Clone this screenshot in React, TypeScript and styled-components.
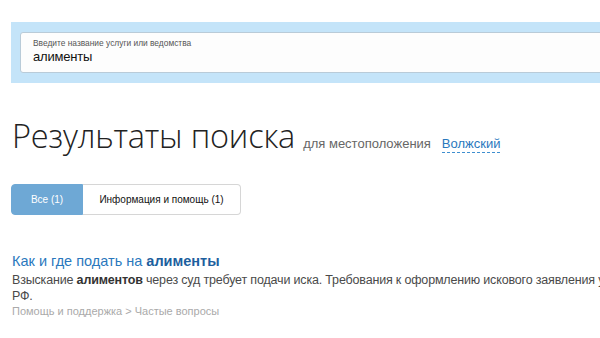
import styled, { createGlobalStyle } from "styled-components";

const Global = createGlobalStyle`
    html, body {
        margin: 0;
        padding: 0;
        background: #fff;
        overflow: hidden;
    }
    body {
        font-family: "Liberation Sans", Arial, sans-serif;
    }
`;

const Page = styled.div`
    width: 760px;
    padding: 22px 0 0 11px;
`;

const SearchBand = styled.div`
    background: #c4e4f9;
    padding: 10px 9px 10px 9px;
`;

const SearchBox = styled.div`
    background: #fdfdfd;
    border: 1px solid #b9cbd8;
    border-radius: 3px;
    height: 41px;
    box-sizing: border-box;
    padding: 5px 12px 0;
`;

const SearchLabel = styled.div`
    font-size: 8.4px;
    color: #555;
    line-height: 10px;
`;

const SearchValue = styled.div`
    font-size: 13px;
    letter-spacing: -0.2px;
    color: #111;
    line-height: 16px;
    margin-top: 1px;
`;

const Heading = styled.div`
    display: flex;
    align-items: baseline;
    margin-top: 33px;
    padding-left: 1px;
`;

const Title = styled.h1`
    margin: 0;
    font-family: "Open Sans", sans-serif;
    font-weight: 300;
    font-size: 32.5px;
    color: #222;
    line-height: 40px;
    letter-spacing: -0.2px;
`;

const Location = styled.span`
    font-size: 13px;
    color: #666;
    margin-left: 8px;
`;

const City = styled.a`
    font-size: 13px;
    color: #2a78bd;
    margin-left: 11px;
    text-decoration: none;
    border-bottom: 1px dashed #3f8fd0;
    padding-bottom: 1px;
`;

const Tabs = styled.div`
    display: flex;
    margin-top: 28px;
`;

const Tab = styled.div<{ $active?: boolean; $w: number }>`
    width: ${(p) => p.$w}px;
    height: 31px;
    box-sizing: border-box;
    display: flex;
    align-items: center;
    justify-content: center;
    font-size: 10px;
    color: ${(p) => (p.$active ? "#fff" : "#111")};
    background: ${(p) => (p.$active ? "#6ea8d5" : "#fff")};
    border: 1px solid ${(p) => (p.$active ? "#6ea8d5" : "#d6d6d6")};
    border-radius: ${(p) => (p.$active ? "4px 0 0 4px" : "0 4px 4px 0")};
    border-left-width: ${(p) => (p.$active ? "1px" : "0")};
`;

const Result = styled.div`
    margin-top: 36px;
    padding-left: 1px;
`;

const ResultTitle = styled.a`
    display: block;
    font-size: 14.5px;
    color: #2a78bd;
    text-decoration: none;
    line-height: 20px;
    b {
        color: #1d5f9e;
    }
`;

const Snippet = styled.p`
    margin: 1px 0 0;
    font-size: 12.5px;
    letter-spacing: -0.17px;
    line-height: 16px;
    color: #4a4a4a;
    width: 700px;
    b {
        color: #333;
    }
`;

const Crumbs = styled.div`
    font-size: 11px;
    color: #aaa;
    line-height: 14px;
    margin-top: 0;
`;

export default function App() {
    return (
        <Page>
            <Global />
            <SearchBand>
                <SearchBox>
                    <SearchLabel>Введите название услуги или ведомства</SearchLabel>
                    <SearchValue>алименты</SearchValue>
                </SearchBox>
            </SearchBand>
            <Heading>
                <Title>Результаты поиска</Title>
                <Location>для местоположения</Location>
                <City href="#">Волжский</City>
            </Heading>
            <Tabs>
                <Tab $active $w={72}>Все (1)</Tab>
                <Tab $w={158}>Информация и помощь (1)</Tab>
            </Tabs>
            <Result>
                <ResultTitle href="#">
                    Как и где подать на <b>алименты</b>
                </ResultTitle>
                <Snippet>
                    Взыскание <b>алиментов</b> через суд требует подачи иска. Требования к
                    оформлению искового заявления установлены ГПК
                    <br />
                    РФ.
                </Snippet>
                <Crumbs>Помощь и поддержка &gt; Частые вопросы</Crumbs>
            </Result>
        </Page>
    );
}
